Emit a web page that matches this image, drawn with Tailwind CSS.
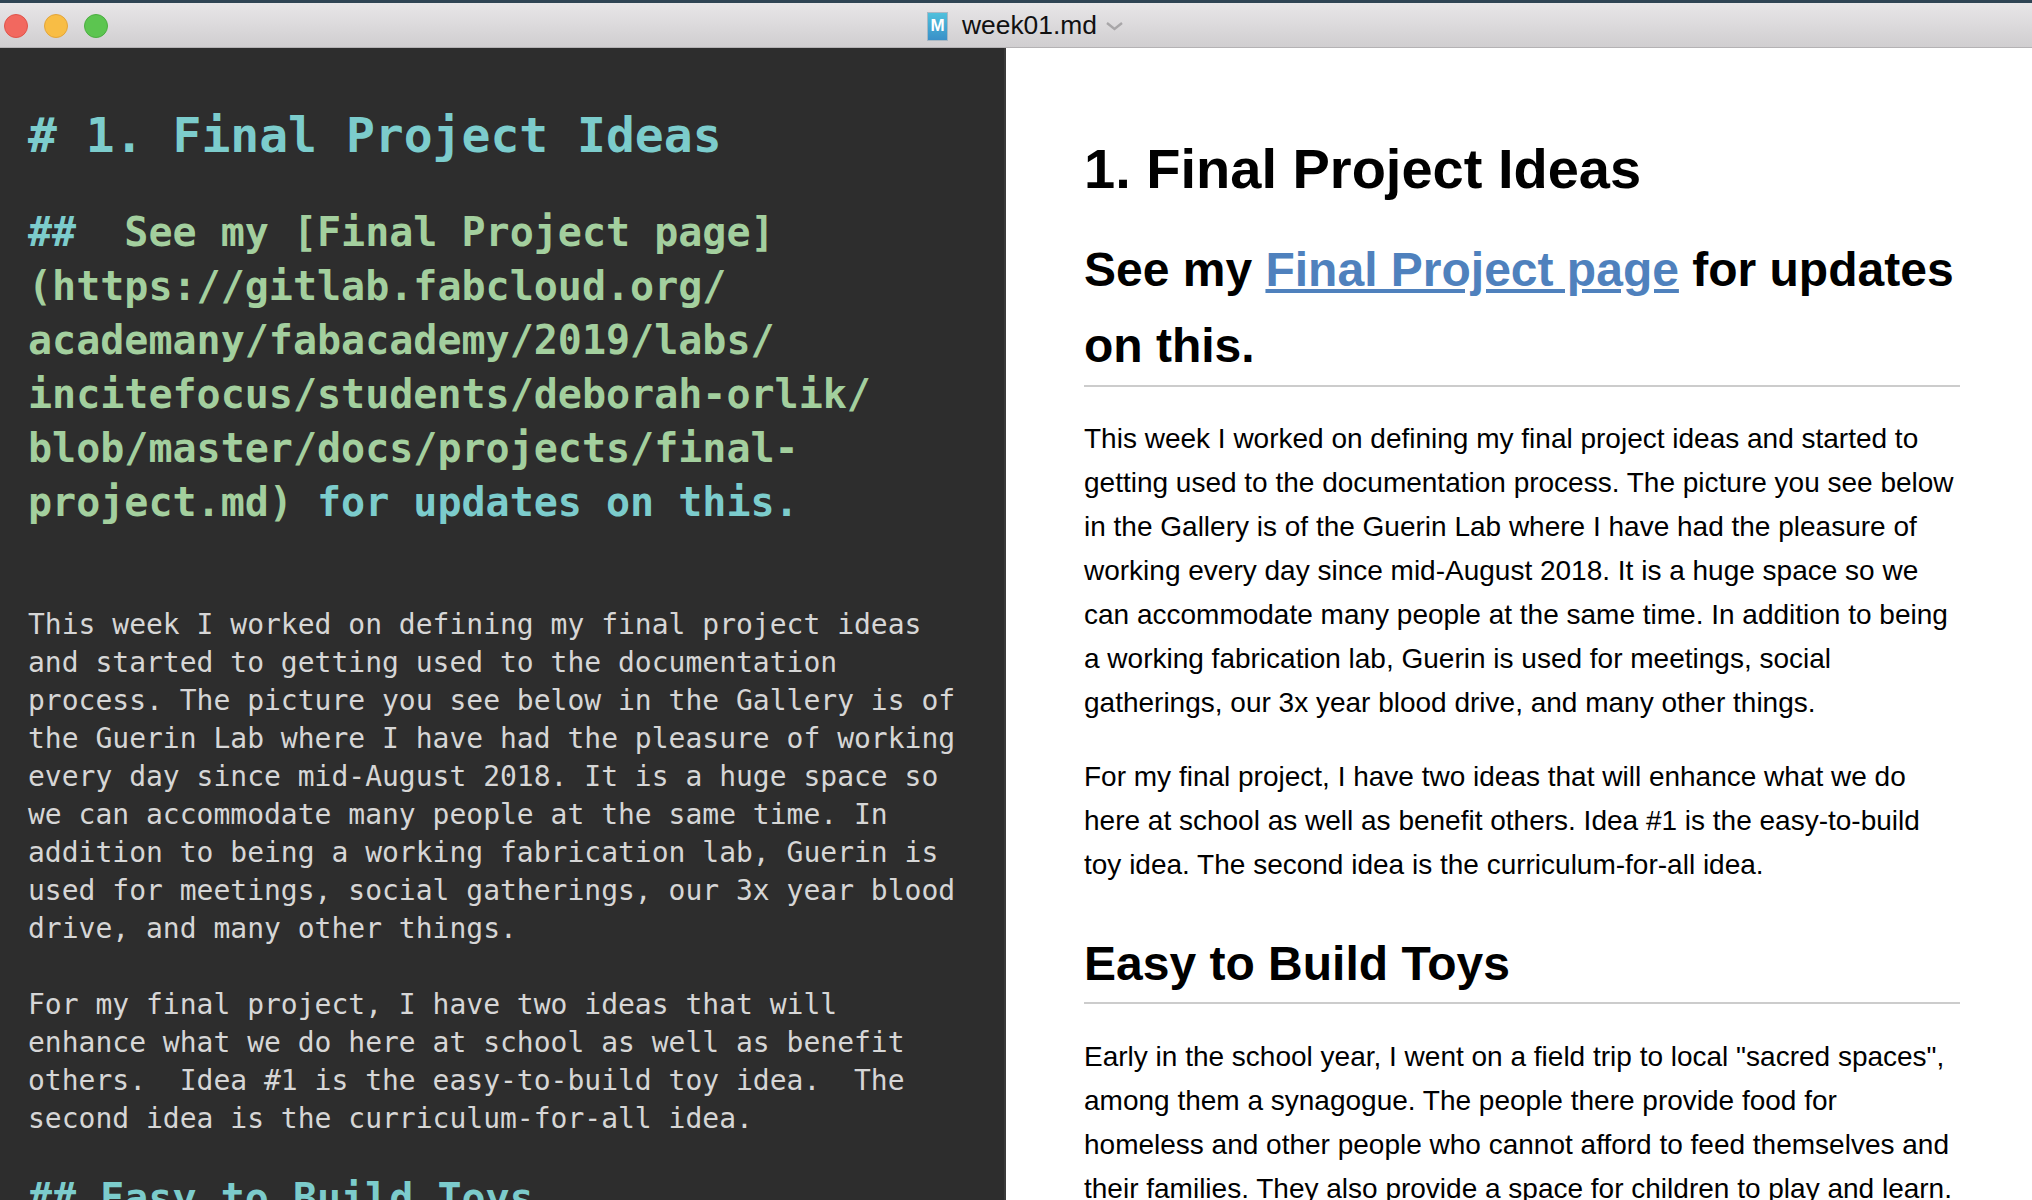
<!DOCTYPE html>
<html lang="en">
<head>
    <meta charset="UTF-8">
    <title>week01.md</title>
    <script src="https://cdn.jsdelivr.net/npm/@tailwindcss/browser@4"></script>
</head>
<body class="h-[1200px] overflow-hidden bg-white">

    <!-- title bar -->
    <header class="h-[48px] pt-[2px] flex items-center relative border-t-[3px] border-[#2f4454] border-b border-b-[#b4b2b4] bg-gradient-to-b from-[#e8e6e8] to-[#d0ced0]">
        <div class="flex gap-[16px] pl-[4px]">
            <span class="w-[24px] h-[24px] rounded-full bg-[#f2685f] border border-[#e0534a]"></span>
            <span class="w-[24px] h-[24px] rounded-full bg-[#f8bd45] border border-[#e3a53a]"></span>
            <span class="w-[24px] h-[24px] rounded-full bg-[#5cc550] border border-[#4bae41]"></span>
        </div>
        <div class="absolute left-[927px] top-[1px] h-full flex items-center">
            <div class="w-[21px] h-[29px] border border-[#a9b8c4] bg-gradient-to-b from-[#4fc0dc] to-[#3a90c8] flex items-center justify-center text-white text-[17px] font-bold font-['Liberation_Sans',sans-serif]">M</div>
            <span class="ml-[14px] text-[26.4px] text-[#111] font-['Liberation_Sans',sans-serif]">week01.md</span>
            <svg class="ml-[9px]" width="17" height="9" viewBox="0 0 17 9" fill="none" stroke="#a8a6a8" stroke-width="2.4"><path d="M1 1l7.5 6L16 1"/></svg>
        </div>
    </header>

    <main class="flex h-[1152px]">
        <!-- editor -->
        <section class="w-[1006px] shrink-0 bg-[#2d2d2d] pl-[28px] pt-[51px] overflow-hidden border-r-[2px] border-[#3a3a3a] font-['DejaVu_Sans_Mono',monospace]">
            <div class="whitespace-pre text-[48px] leading-[72px] font-bold text-[#7ccccc]"># 1. Final Project Ideas</div>
            <div class="whitespace-pre mt-[34px] text-[40px] leading-[54px] font-bold text-[#7ccccc]">##  <span class="text-[#a3cf9e]">See my [Final Project page]
(https://gitlab.fabcloud.org/
academany/fabacademy/2019/labs/
incitefocus/students/deborah-orlik/
blob/master/docs/projects/final-
project.md)</span> for updates on this.</div>
            <div class="whitespace-pre mt-[77px] text-[28px] leading-[38px] text-[#d6d6d6]">This week I worked on defining my final project ideas
and started to getting used to the documentation
process. The picture you see below in the Gallery is of
the Guerin Lab where I have had the pleasure of working
every day since mid-August 2018. It is a huge space so
we can accommodate many people at the same time. In
addition to being a working fabrication lab, Guerin is
used for meetings, social gatherings, our 3x year blood
drive, and many other things.

For my final project, I have two ideas that will
enhance what we do here at school as well as benefit
others.  Idea #1 is the easy-to-build toy idea.  The
second idea is the curriculum-for-all idea.</div>
            <div class="whitespace-pre mt-[33px] text-[40px] leading-[54px] font-bold text-[#7ccccc]">## Easy to Build Toys</div>
        </section>

        <!-- preview -->
        <section class="flex-1 pl-[78px] pr-[72px] pt-[86px] overflow-hidden text-black font-['Liberation_Sans',sans-serif] text-[28px] leading-[44px]">
            <h1 class="text-[56px] leading-[70px] font-bold">1. Final Project Ideas</h1>
            <h2 class="mt-[28px] text-[48px] leading-[76px] font-bold pb-[1px] border-b-2 border-[#cccccc]">See my <a class="text-[#4f81bd] underline">Final Project page</a> for updates on this.</h2>
            <p class="mt-[30px]">This week I worked on defining my final project ideas and started to getting used to the documentation process. The picture you see below in the Gallery is of the Guerin Lab where I have had the pleasure of working every day since mid-August 2018. It is a huge space so we can accommodate many people at the same time. In addition to being a working fabrication lab, Guerin is used for meetings, social gatherings, our 3x year blood drive, and many other things.</p>
            <p class="mt-[30px]">For my final project, I have two ideas that will enhance what we do here at school as well as benefit others. Idea #1 is the easy-to-build toy idea. The second idea is the curriculum-for-all idea.</p>
            <h2 class="mt-[47px] text-[48px] leading-[60px] font-bold pb-[8px] border-b-2 border-[#cccccc]">Easy to Build Toys</h2>
            <p class="mt-[31px]">Early in the school year, I went on a field trip to local "sacred spaces", among them a synagogue. The people there provide food for homeless and other people who cannot afford to feed themselves and their families. They also provide a space for children to play and learn.</p>
        </section>
    </main>
</body>
</html>
